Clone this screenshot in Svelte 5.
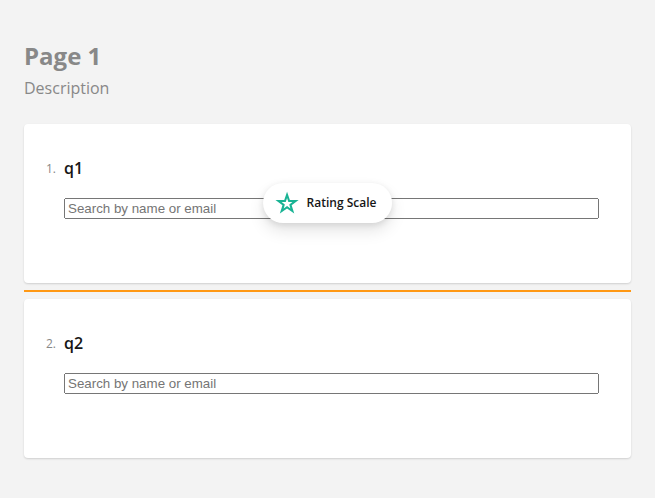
<script>
  const questions = [
    { id: 'q1', title: 'q1' },
    { id: 'q2', title: 'q2' },
  ];
  const dropAfter = 0;
</script>

<main class="page">
  <header>
    <h1>Page 1</h1>
    <p>Description</p>
  </header>

  {#each questions as question, i (question.id)}
    <section class="card">
      <label class="title" for={question.id}>
        <span class="number">{i + 1}.</span>
        <span>{question.title}</span>
      </label>
      <div class="field">
        <input id={question.id} type="text" placeholder="Search by name or email" />
      </div>
      {#if i === dropAfter}
        <div class="dragged">
          <svg width="24" height="24" viewBox="0 0 24 24" aria-hidden="true">
            <path
              fill="#19b394"
              fill-rule="evenodd"
              d="M12 0.8L14.8 9H23.6L16.6 14.2L19.2 22.6L12 17.5L4.8 22.6L7.4 14.2L0.4 9H9.2ZM12 7L10.7 11H6.6L9.8 13.4L8.6 17.4L12 15L15.4 17.4L14.2 13.4L17.4 11H13.3Z"
            />
          </svg>
          <span>Rating Scale</span>
        </div>
      {/if}
    </section>
    {#if i === dropAfter}
      <div class="drop-line"></div>
    {/if}
  {/each}
</main>

<style>
  :global(body) {
    background: #f3f3f3;
  }

  .page {
    display: flex;
    flex-direction: column;
    padding: 40px 24px;
    font-family: 'Open Sans', 'Noto Sans', sans-serif;
  }

  header {
    margin-bottom: 24px;
    color: #888;
  }

  h1 {
    margin: 0 0 4px;
    font-size: 24px;
    font-weight: 700;
    line-height: 32px;
  }

  p {
    margin: 0;
    font-size: 16px;
    line-height: 24px;
  }

  .card {
    position: relative;
    box-sizing: border-box;
    min-height: 159px;
    padding: 32px 32px 64px 40px;
    border-radius: 4px;
    background: #fff;
    box-shadow: 0 1px 2px rgba(0, 0, 0, 0.15);
  }

  .title {
    display: flex;
    align-items: center;
    gap: 8px;
    margin: 0 0 18px -24px;
    color: #161616;
    font-size: 16px;
    font-weight: 600;
    line-height: 24px;
  }

  .number {
    width: 16px;
    padding-top: 2px;
    color: #888;
    font-size: 12px;
    font-weight: 500;
    line-height: 22px;
    text-align: right;
  }

  .field {
    display: flex;
  }

  input {
    flex: 1;
    min-width: 0;
    margin: 0;
  }

  .drop-line {
    height: 2px;
    margin: 7px 0;
    background: #ff9814;
  }

  .dragged {
    position: absolute;
    top: 59px;
    left: 50%;
    display: flex;
    align-items: center;
    gap: 8px;
    box-sizing: border-box;
    height: 40px;
    padding: 0 16px 0 12px;
    border-radius: 20px;
    background: #fff;
    box-shadow: 0 8px 16px rgba(0, 0, 0, 0.1), 0 2px 6px rgba(0, 0, 0, 0.1);
    color: #161616;
    font-size: 12px;
    font-weight: 600;
    line-height: 16px;
    white-space: nowrap;
    transform: translateX(-50%);
  }
</style>
